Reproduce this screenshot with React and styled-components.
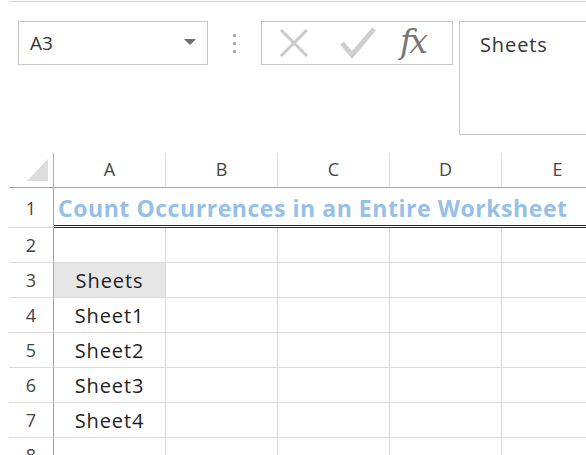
import React from "react";
import styled, { createGlobalStyle } from "styled-components";

const Global = createGlobalStyle`
  html, body { margin: 0; padding: 0; background: #ffffff; }
  body { font-family: "Open Sans", "Liberation Sans", sans-serif; }
`;

const Page = styled.div`
  width: 586px;
  height: 455px;
  overflow: hidden;
  padding-left: 9px;
  box-sizing: border-box;
  background: #fff;
`;

const TopRule = styled.div`
  margin-top: 1px;
  border-top: 1px solid #d6d6d6;
`;

const FormulaRow = styled.div`
  display: flex;
  align-items: flex-start;
  padding-top: 19px;
  padding-left: 9px;
  height: 113px;
`;

const NameBox = styled.div`
  box-sizing: border-box;
  width: 190px;
  height: 44px;
  border: 1px solid #c6c6c6;
  display: flex;
  align-items: center;
  justify-content: space-between;
  padding: 0 11px 0 11px;
  font-size: 19px;
  color: #333;
`;

const Caret = styled.span`
  width: 0;
  height: 0;
  border-left: 6px solid transparent;
  border-right: 6px solid transparent;
  border-top: 6px solid #6e6e6e;
  margin-top: -3px;
`;

const Grip = styled.div`
  width: 53px;
  height: 44px;
  display: flex;
  flex-direction: column;
  align-items: center;
  justify-content: center;
  gap: 5px;
`;

const GripDot = styled.span`
  width: 3px;
  height: 3px;
  background: #a8a8a8;
  border-radius: 1px;
`;

const FxBox = styled.div`
  box-sizing: border-box;
  width: 192px;
  height: 44px;
  border: 1px solid #c6c6c6;
  display: flex;
  align-items: center;
  padding-left: 16px;
`;

const IconSlot = styled.div`
  display: flex;
  align-items: center;
  justify-content: center;
  width: ${(p) => p.$w}px;
  margin-right: ${(p) => p.$gap}px;
`;

const FxLabel = styled.span`
  font-family: "DejaVu Serif", "Liberation Serif", serif;
  font-style: italic;
  font-size: 33px;
  color: #777;
  line-height: 1;
  margin-top: -4px;
  letter-spacing: -3px;
`;

const FormulaInput = styled.div`
  box-sizing: border-box;
  flex: 1;
  margin-left: 6px;
  height: 114px;
  border: 1px solid #c6c6c6;
  border-right: none;
  padding: 9px 0 0 20px;
  font-size: 20px;
  letter-spacing: 0.9px;
  color: #333;
`;

const Sheet = styled.div`
  margin-top: 19px;
  display: grid;
  grid-template-columns: 45px repeat(5, 112px);
  grid-template-rows: 35px 40px repeat(7, 35px);
  width: 605px;
`;

const Corner = styled.div`
  box-sizing: border-box;
  border-right: 1px solid #b4b4b4;
  border-bottom: 1px solid #a6a6a6;
  display: flex;
  align-items: flex-end;
  justify-content: flex-end;
  padding: 0 5px 6px 0;
`;

const CornerTriangle = styled.span`
  width: 0;
  height: 0;
  border-left: 21px solid transparent;
  border-bottom: 22px solid #dcdcdc;
`;

const ColHeader = styled.div`
  box-sizing: border-box;
  border-right: 1px solid #dadada;
  border-bottom: 1px solid #a6a6a6;
  display: flex;
  align-items: center;
  justify-content: center;
  font-size: 18px;
  color: #444;
  padding-bottom: 2px;
`;

const RowHeader = styled.div`
  box-sizing: border-box;
  border-right: 1px solid #a6a6a6;
  border-bottom: 1px solid #dcdcdc;
  display: flex;
  align-items: center;
  justify-content: center;
  font-size: 18px;
  color: #444;
`;

const Cell = styled.div`
  box-sizing: border-box;
  border-right: ${(p) => (p.$title ? "none" : "1px solid #dadada")};
  border-bottom: ${(p) => (p.$title ? "3px double #2a2a2a" : "1px solid #dadada")};
  background: ${(p) => (p.$selected ? "#e6e6e6" : "transparent")};
  display: flex;
  align-items: center;
  justify-content: ${(p) => (p.$title ? "flex-start" : "center")};
  font-size: 20px;
  letter-spacing: 0.9px;
  color: #1e1e1e;
  white-space: nowrap;
  overflow: visible;
  min-width: 0;
`;

const TitleText = styled.span`
  flex-shrink: 0;
  padding-left: 4px;
  padding-top: 2px;
  font-size: 23px;
  font-weight: 700;
  letter-spacing: 0.55px;
  color: #95c0e8;
`;

const cols = ["A", "B", "C", "D", "E"];
const data = {
  3: "Sheets",
  4: "Sheet1",
  5: "Sheet2",
  6: "Sheet3",
  7: "Sheet4",
};

function XIcon() {
  return (
    <svg width="32" height="32" viewBox="0 0 32 32">
      <path d="M3 3 L29 29 M29 3 L3 29" stroke="#c9c9c9" strokeWidth="3" fill="none" />
    </svg>
  );
}

function CheckIcon() {
  return (
    <svg width="36" height="32" viewBox="0 0 36 32">
      <path d="M2 16 L12 28 L34 2" stroke="#cfcfcf" strokeWidth="5" fill="none" strokeLinejoin="miter" />
    </svg>
  );
}

export default function App() {
  const rows = [1, 2, 3, 4, 5, 6, 7, 8];
  return (
    <Page>
      <Global />
      <TopRule />
      <FormulaRow>
        <NameBox>
          <span>A3</span>
          <Caret />
        </NameBox>
        <Grip>
          <GripDot />
          <GripDot />
          <GripDot />
        </Grip>
        <FxBox>
          <IconSlot $w={32} $gap={30}>
            <XIcon />
          </IconSlot>
          <IconSlot $w={36} $gap={24}>
            <CheckIcon />
          </IconSlot>
          <FxLabel>fx</FxLabel>
        </FxBox>
        <FormulaInput>Sheets</FormulaInput>
      </FormulaRow>
      <Sheet>
        <Corner>
          <CornerTriangle />
        </Corner>
        {cols.map((c) => (
          <ColHeader key={c}>{c}</ColHeader>
        ))}
        {rows.map((r) => (
          <React.Fragment key={r}>
            <RowHeader>{r}</RowHeader>
            {cols.map((c) => (
              <Cell key={c} $title={r === 1} $selected={r === 3 && c === "A"}>
                {r === 1 && c === "A" ? (
                  <TitleText>Count Occurrences in an Entire Worksheet</TitleText>
                ) : c === "A" && data[r] ? (
                  data[r]
                ) : null}
              </Cell>
            ))}
          </React.Fragment>
        ))}
      </Sheet>
    </Page>
  );
}
